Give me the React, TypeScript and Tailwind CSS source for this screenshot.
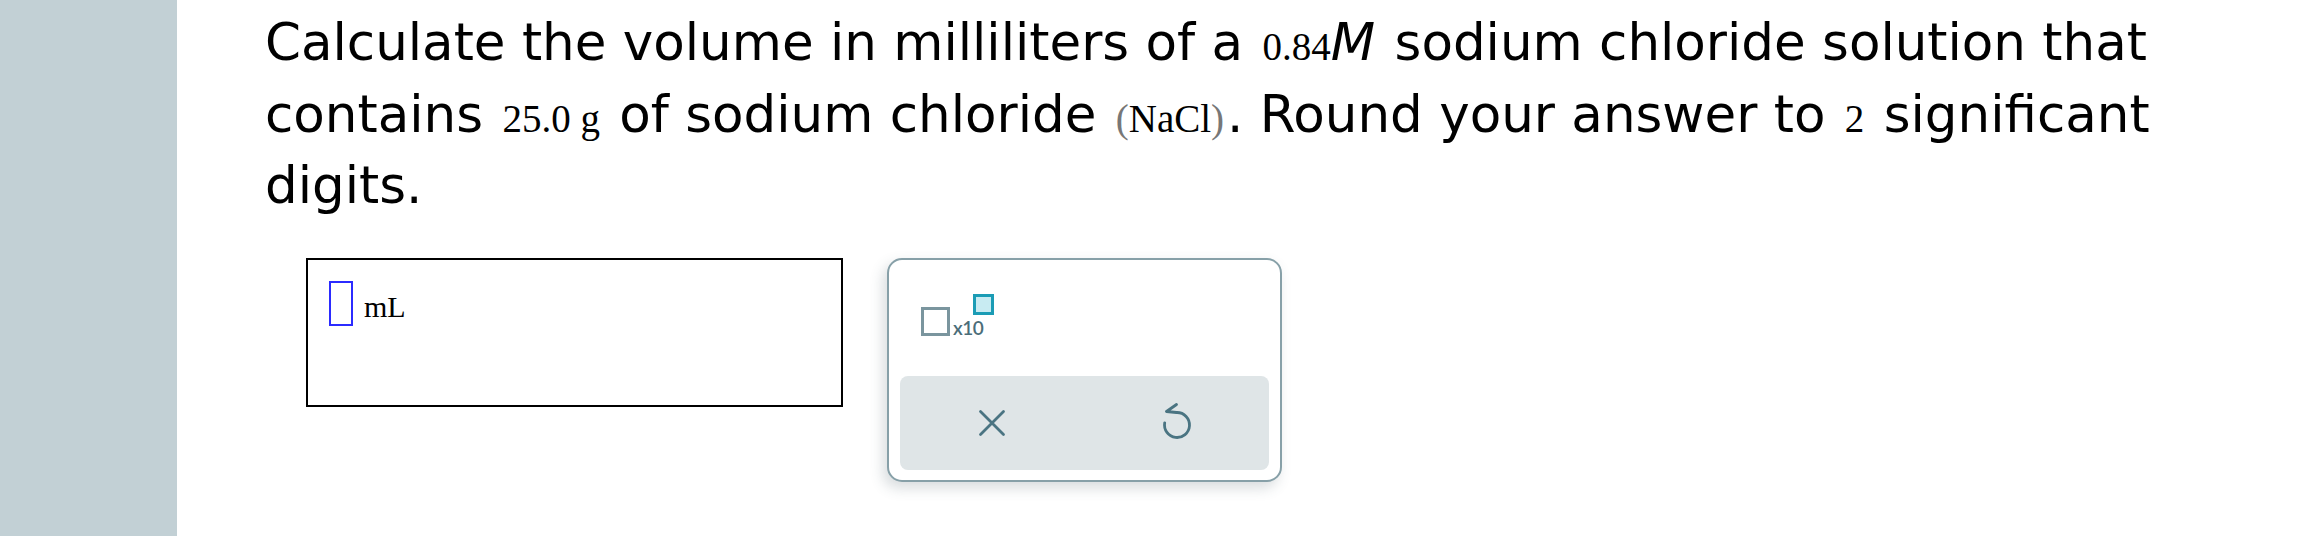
const texts = {
  unit: "mL",
  times: "x10",
};

function CloseIcon() {
  return (
    <svg width="28" height="28" viewBox="0 0 28 28" fill="none">
      <path
        d="M2.5 2.5L25.5 25.5M25.5 2.5L2.5 25.5"
        stroke="#4a7482"
        strokeWidth="2.8"
        strokeLinecap="round"
      />
    </svg>
  );
}

function UndoIcon() {
  return (
    <svg width="32" height="40" viewBox="0 0 32 40" fill="none">
      <path
        d="M16 9.5A12.5 12.5 0 1 1 3.7 19.8"
        stroke="#4a7482"
        strokeWidth="2.8"
        strokeLinecap="round"
      />
      <path
        d="M15.5 1.5L5.5 8.5L15.5 9.5"
        stroke="#4a7482"
        strokeWidth="2.8"
        strokeLinecap="round"
        strokeLinejoin="round"
      />
    </svg>
  );
}

function ScientificIcon() {
  return (
    <div className="relative w-[76px] h-[46px]">
      <div className="absolute left-[1px] top-[14px] w-[29px] h-[29px] border-[3px] border-[#7a959e]" />
      <span className="absolute left-[33px] top-[25px] font-['Lato'] font-semibold text-[19px] leading-[19px] tracking-[-0.5px] text-[#4b6d79]">
        {texts.times}
      </span>
      <div className="absolute left-[53px] top-[1px] w-[21px] h-[21px] border-[3px] border-[#1b9cb5] bg-[#c8ebf2]" />
    </div>
  );
}

export default function App() {
  const serif = "font-['Liberation_Serif'] text-[39px]";

  return (
    <div className="flex w-full h-[536px] bg-white">
      <div className="w-[177px] shrink-0 bg-[#c2d0d5]" />
      <div className="flex-1 pl-[88px] pt-[9px]">
        <p className="font-['DejaVu_Sans'] text-[51.5px] leading-[66.5px] text-black">
          Calculate the volume in milliliters of a{" "}
          <span className="mx-[3px]">
            <span className={serif}>0.84</span>
            <i>M</i>
          </span>{" "}
          sodium chloride solution that
          <br />
          contains <span className={`${serif} mx-[3px]`}>25.0 g</span> of
          sodium chloride{" "}
          <span className={`${serif} mx-[3px]`}>
            <span className="text-[#777]">(</span>NaCl
            <span className="text-[#777]">)</span>
          </span>
          . Round your answer to <span className={`${serif} mx-[3px]`}>2</span>{" "}
          significant
          <br />
          digits.
        </p>

        <div className="flex items-start gap-[44px] pl-[41px] mt-[39px]">
          <div className="w-[537px] h-[149px] border-2 border-black flex items-start pl-[21px] pt-[21px]">
            <div className="w-[24px] h-[45px] border-2 border-[#2b2bff]" />
            <span className="ml-[11px] mt-[11px] font-['Liberation_Serif'] text-[30px] leading-[30px] text-black">
              {texts.unit}
            </span>
          </div>

          <div className="w-[395px] h-[224px] flex flex-col border-2 border-[#87a0a8] rounded-[15px] bg-white shadow-[-4px_6px_14px_rgba(60,80,90,0.2)]">
            <div className="flex-1 pl-[31px] pt-[33px]">
              <ScientificIcon />
            </div>
            <div className="mx-[11px] mb-[10px] h-[94px] flex rounded-[8px] bg-[#dfe5e7]">
              <div className="flex-1 flex items-center justify-center">
                <CloseIcon />
              </div>
              <div className="flex-1 flex items-center justify-center">
                <UndoIcon />
              </div>
            </div>
          </div>
        </div>
      </div>
    </div>
  );
}
